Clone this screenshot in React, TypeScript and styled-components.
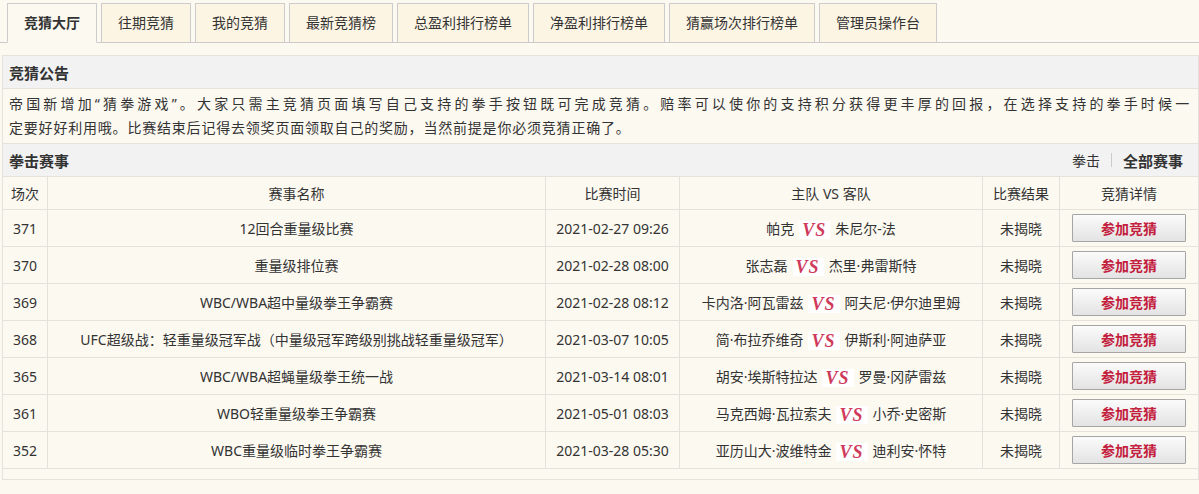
import React from 'react';
import styled, { createGlobalStyle } from 'styled-components';

const PAGE_BG = '#fcf9f1';
const TAB_BG = '#fdf5e4';
const LINE = '#e4e2da';
const HEAD_BG = '#f2f2f2';
const TEXT = '#333333';

const GlobalStyle = createGlobalStyle`
  html, body {
    margin: 0;
    padding: 0;
    background: ${PAGE_BG};
    overflow: hidden;
  }
  body {
    font-family: "Noto Sans", "Noto Sans CJK SC", sans-serif;
    font-size: 14px;
    color: ${TEXT};
  }
`;

const Page = styled.div`
  width: 1199px;
`;

const TabBar = styled.nav`
  display: flex;
  align-items: flex-end;
  gap: 4px;
  padding: 3px 0 0 7px;
  border-bottom: 1px solid #d0c9cc;
`;

const Tab = styled.a<{ $active?: boolean }>`
  display: block;
  height: 38px;
  line-height: 38px;
  padding: 0 16px;
  margin-bottom: -1px;
  border: 1px solid #cccccc;
  border-bottom-color: ${({ $active }) => ($active ? PAGE_BG : '#d0c9cc')};
  background: ${({ $active }) => ($active ? PAGE_BG : TAB_BG)};
  font-weight: ${({ $active }) => ($active ? 700 : 400)};
  color: ${TEXT};
  white-space: nowrap;
  cursor: pointer;
`;

const Box = styled.section`
  margin: 12px 0 0 2px;
  border: 1px solid ${LINE};
  box-sizing: border-box;
  width: 1197px;
`;

const SectionHead = styled.div`
  display: flex;
  align-items: center;
  justify-content: space-between;
  height: 32px;
  padding: 0 15px 0 6px;
  background: ${HEAD_BG};
  border-bottom: 1px solid ${LINE};
`;

const SectionTitle = styled.h3`
  margin: 0;
  font-size: 15px;
  font-weight: 700;
  color: ${TEXT};
`;

const Filters = styled.div`
  display: flex;
  align-items: center;
  font-size: 14px;
`;

const Filter = styled.a<{ $current?: boolean }>`
  color: ${TEXT};
  font-weight: ${({ $current }) => ($current ? 700 : 400)};
  font-size: ${({ $current }) => ($current ? '15px' : '14px')};
`;

const Divider = styled.span`
  width: 1px;
  height: 14px;
  margin: 0 11px;
  background: #cccccc;
`;

const Notice = styled.div`
  padding: 3px 6px 3px 6px;
  line-height: 24px;
  letter-spacing: 0.8px;
  border-bottom: 1px solid ${LINE};
`;

const NoticeLine = styled.div<{ $justify?: boolean }>`
  white-space: ${({ $justify }) => ($justify ? 'normal' : 'nowrap')};
  text-align: ${({ $justify }) => ($justify ? 'justify' : 'left')};
  text-align-last: ${({ $justify }) => ($justify ? 'justify' : 'auto')};
  width: ${({ $justify }) => ($justify ? '1181px' : 'auto')};
`;

const Row = styled.div<{ $head?: boolean }>`
  display: grid;
  grid-template-columns: 45px 498px 134px 303px 77px 1fr;
  height: ${({ $head }) => ($head ? '33px' : '37px')};
  border-bottom: 1px solid ${LINE};
  box-sizing: border-box;
`;

const Cell = styled.div<{ $last?: boolean }>`
  display: flex;
  align-items: center;
  justify-content: center;
  border-right: ${({ $last }) => ($last ? 'none' : `1px solid ${LINE}`)};
  white-space: nowrap;
  color: ${TEXT};
`;

const Vs = styled.span`
  display: inline-block;
  padding: 0 4px 0 3px;
  margin: 0 5px;
  background: #ffffff;
  font-family: "Liberation Serif", "DejaVu Serif", serif;
  font-style: italic;
  font-weight: 700;
  font-size: 18px;
  line-height: 18px;
  letter-spacing: 1px;
  color: #cf3a5c;
  position: relative;
  top: 2px;
`;

const JoinButton = styled.button`
  width: 114px;
  height: 28px;
  padding: 0;
  border: 1px solid #a5a5a5;
  border-radius: 1px;
  background: linear-gradient(#fbfbfb, #e3e3e3);
  font-family: "Noto Sans", "Noto Sans CJK SC", sans-serif;
  font-size: 14px;
  font-weight: 700;
  color: #c3203d;
  cursor: pointer;
`;

const Footer = styled.div`
  height: 10px;
`;

const TABS = [
  '竞猜大厅',
  '往期竞猜',
  '我的竞猜',
  '最新竞猜榜',
  '总盈利排行榜单',
  '净盈利排行榜单',
  '猜赢场次排行榜单',
  '管理员操作台',
];

type Match = {
  id: number;
  name: string;
  time: string;
  home: string;
  away: string;
};

const MATCHES: Match[] = [
  { id: 371, name: '12回合重量级比赛', time: '2021-02-27 09:26', home: '帕克', away: '朱尼尔-法' },
  { id: 370, name: '重量级排位赛', time: '2021-02-28 08:00', home: '张志磊', away: '杰里·弗雷斯特' },
  { id: 369, name: 'WBC/WBA超中量级拳王争霸赛', time: '2021-02-28 08:12', home: '卡内洛·阿瓦雷兹', away: '阿夫尼·伊尔迪里姆' },
  {
    id: 368,
    name: 'UFC超级战：轻重量级冠军战（中量级冠军跨级别挑战轻重量级冠军）',
    time: '2021-03-07 10:05',
    home: '简·布拉乔维奇',
    away: '伊斯利·阿迪萨亚',
  },
  { id: 365, name: 'WBC/WBA超蝇量级拳王统一战', time: '2021-03-14 08:01', home: '胡安·埃斯特拉达', away: '罗曼·冈萨雷兹' },
  { id: 361, name: 'WBO轻重量级拳王争霸赛', time: '2021-05-01 08:03', home: '马克西姆·瓦拉索夫', away: '小乔·史密斯' },
  { id: 352, name: 'WBC重量级临时拳王争霸赛', time: '2021-03-28 05:30', home: '亚历山大·波维特金', away: '迪利安·怀特' },
];

const HEADERS = ['场次', '赛事名称', '比赛时间', '主队 VS 客队', '比赛结果', '竞猜详情'];

export default function App() {
  return (
    <Page>
      <GlobalStyle />
      <TabBar>
        {TABS.map((t, i) => (
          <Tab key={t} $active={i === 0}>
            {t}
          </Tab>
        ))}
      </TabBar>

      <Box>
        <SectionHead>
          <SectionTitle>竞猜公告</SectionTitle>
        </SectionHead>
        <Notice>
          <NoticeLine $justify>
            帝国新增加“猜拳游戏”。大家只需主竞猜页面填写自己支持的拳手按钮既可完成竞猜。赔率可以使你的支持积分获得更丰厚的回报，在选择支持的拳手时候一
          </NoticeLine>
          <NoticeLine>
            定要好好利用哦。比赛结束后记得去领奖页面领取自己的奖励，当然前提是你必须竞猜正确了。
          </NoticeLine>
        </Notice>

        <SectionHead>
          <SectionTitle>拳击赛事</SectionTitle>
          <Filters>
            <Filter>拳击</Filter>
            <Divider />
            <Filter $current>全部赛事</Filter>
          </Filters>
        </SectionHead>

        <Row $head>
          {HEADERS.map((h, i) => (
            <Cell key={h} $last={i === HEADERS.length - 1}>
              {h}
            </Cell>
          ))}
        </Row>
        {MATCHES.map((m) => (
          <Row key={m.id}>
            <Cell>{m.id}</Cell>
            <Cell>{m.name}</Cell>
            <Cell>{m.time}</Cell>
            <Cell>
              {m.home}
              <Vs>VS</Vs>
              {m.away}
            </Cell>
            <Cell>未揭晓</Cell>
            <Cell $last>
              <JoinButton>参加竞猜</JoinButton>
            </Cell>
          </Row>
        ))}
        <Footer />
      </Box>
    </Page>
  );
}
